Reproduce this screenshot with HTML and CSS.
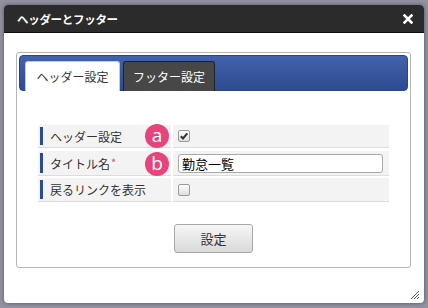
FILE: index.html
```html
<!DOCTYPE html>
<html lang="ja">
<head>
<meta charset="utf-8">
<link rel="stylesheet" href="styles.css">
</head>
<body>
<div class="dialog">
  <div class="titlebar">
    <span class="title">ヘッダーとフッター</span>
    <svg class="close" width="10" height="10" viewBox="0 0 10 10"><path d="M1.5 1.5 L8.5 8.5 M8.5 1.5 L1.5 8.5" stroke="#fff" stroke-width="2.6" stroke-linecap="square"/></svg>
  </div>
  <div class="content">
    <div class="panel">
      <div class="tabs">
        <div class="tab active">ヘッダー設定</div>
        <div class="tab">フッター設定</div>
      </div>
      <div class="form">
        <div class="row r1">
          <div class="label">ヘッダー設定<span class="badge">a</span></div>
          <div class="value"><span class="checkbox"><svg width="10" height="10" viewBox="0 0 10 10"><path d="M1.8 5.2 L4 7.5 L8.3 2.3" fill="none" stroke="#333" stroke-width="2"/></svg></span></div>
        </div>
        <div class="row r2">
          <div class="label">タイトル名<span class="req">*</span><span class="badge">b</span></div>
          <div class="value"><input class="text" type="text" value="勤怠一覧"></div>
        </div>
        <div class="row r3">
          <div class="label">戻るリンクを表示</div>
          <div class="value"><span class="checkbox"></span></div>
        </div>
      </div>
      <div class="actions"><button class="btn">設定</button></div>
    </div>
  </div>
  <svg class="grip" width="12" height="12" viewBox="0 0 12 12"><path d="M11 3 L3 11 M11 6 L6 11 M11 9 L9 11" stroke="#555" stroke-width="1"/></svg>
</div>
</body>
</html>
```
FILE: styles.css
```css
html, body {
  margin: 0;
  padding: 0;
}
body {
  background: #9392a2;
  padding: 5px 0 0 4px;
  width: 428px;
  height: 308px;
  box-sizing: border-box;
  font-family: "Noto Sans CJK JP", "Noto Sans", sans-serif;
}
.dialog {
  position: relative;
  width: 420px;
  height: 298px;
  background: #fff;
  border-radius: 4px;
  box-shadow: 0 0 4px rgba(40, 40, 60, 0.6);
  overflow: hidden;
}
.titlebar {
  height: 27px;
  background: #2b2b2b;
  border-bottom: 1px solid #0e0e0e;
  display: flex;
  align-items: center;
  justify-content: space-between;
  padding: 0 11px 0 13px;
}
.title {
  color: #fff;
  font-size: 11.5px;
  font-weight: bold;
  letter-spacing: -0.3px;
}
.close {
  display: block;
}
.content {
  padding: 19px 13px 0 12px;
}
.panel {
  border: 1px solid #b4b4b4;
  border-radius: 3px;
  padding: 2px 2px 14px 2px;
}
.tabs {
  height: 36px;
  box-sizing: border-box;
  padding: 5px 5px 0;
  display: flex;
  gap: 3px;
  border-radius: 4px;
  background: linear-gradient(#4262ab, #2e4b91);
  border: 1px solid #2b4587;
}
.tab {
  height: 30px;
  box-sizing: border-box;
  width: 92px;
  text-align: center;
  font-size: 12px;
  line-height: 29px;
  color: #fff;
  background: #474747;
  border: 1px solid #222;
  border-bottom: none;
  border-radius: 3px 3px 0 0;
}
.tab.active {
  width: 95px;
  background: #fff;
  color: #333;
  border-color: #c8c8c8;
}
.form {
  margin: 34px 19px 0 19px;
  display: flex;
  flex-direction: column;
  gap: 3px;
}
.row {
  display: flex;
  gap: 2px;
}
.r1 { height: 23px; }
.r2 { height: 25px; }
.r3 { height: 24px; margin-top: -1px; }
.label, .value {
  background: #f3f3f3;
  border-bottom: 1px solid #dcdcdc;
  display: flex;
  align-items: center;
}
.label {
  position: relative;
  width: 133px;
  flex: none;
  padding-left: 12px;
  box-sizing: border-box;
  font-size: 12px;
  color: #333;
}
.label::before {
  content: "";
  position: absolute;
  left: 2px;
  top: 2px;
  bottom: 2px;
  width: 3px;
  background: #2c4a8c;
}
.value {
  flex: 1;
  padding-left: 5px;
}
.req {
  color: #e8437b;
  font-size: 11px;
  align-self: flex-start;
  margin-top: 3px;
  margin-left: 1px;
}
.badge {
  position: absolute;
  right: 2px;
  top: 50%;
  margin-top: -12px;
  width: 24px;
  height: 24px;
  border-radius: 50%;
  background: #e8437b;
  color: #fff;
  font-family: "Open Sans", "Noto Sans", sans-serif;
  font-size: 19px;
  line-height: 22px;
  text-align: center;
}
.r2 .badge {
  margin-top: -11px;
}
.checkbox {
  width: 12px;
  height: 12px;
  box-sizing: border-box;
  border: 1px solid #9a9a9a;
  border-radius: 2px;
  background: linear-gradient(#fdfdfd, #dedede);
  display: flex;
  align-items: center;
  justify-content: center;
}
.checkbox svg {
  display: block;
}
.text {
  width: 205px;
  height: 19px;
  box-sizing: border-box;
  border: 1px solid #a9a9a9;
  border-radius: 3px;
  padding: 0 3px;
  font-family: "Noto Sans CJK JP", sans-serif;
  font-size: 13px;
  color: #000;
  background: #fff;
  margin: 0;
}
.actions {
  display: flex;
  justify-content: center;
  margin-top: 22px;
}
.btn {
  width: 79px;
  height: 29px;
  border: 1px solid #a8a8a8;
  border-radius: 3px;
  background: linear-gradient(#f6f6f6, #d9d9d9);
  font-family: "Noto Sans CJK JP", sans-serif;
  font-size: 13px;
  color: #333;
  padding: 0;
}
.grip {
  position: absolute;
  right: 4px;
  bottom: 3px;
}
```
